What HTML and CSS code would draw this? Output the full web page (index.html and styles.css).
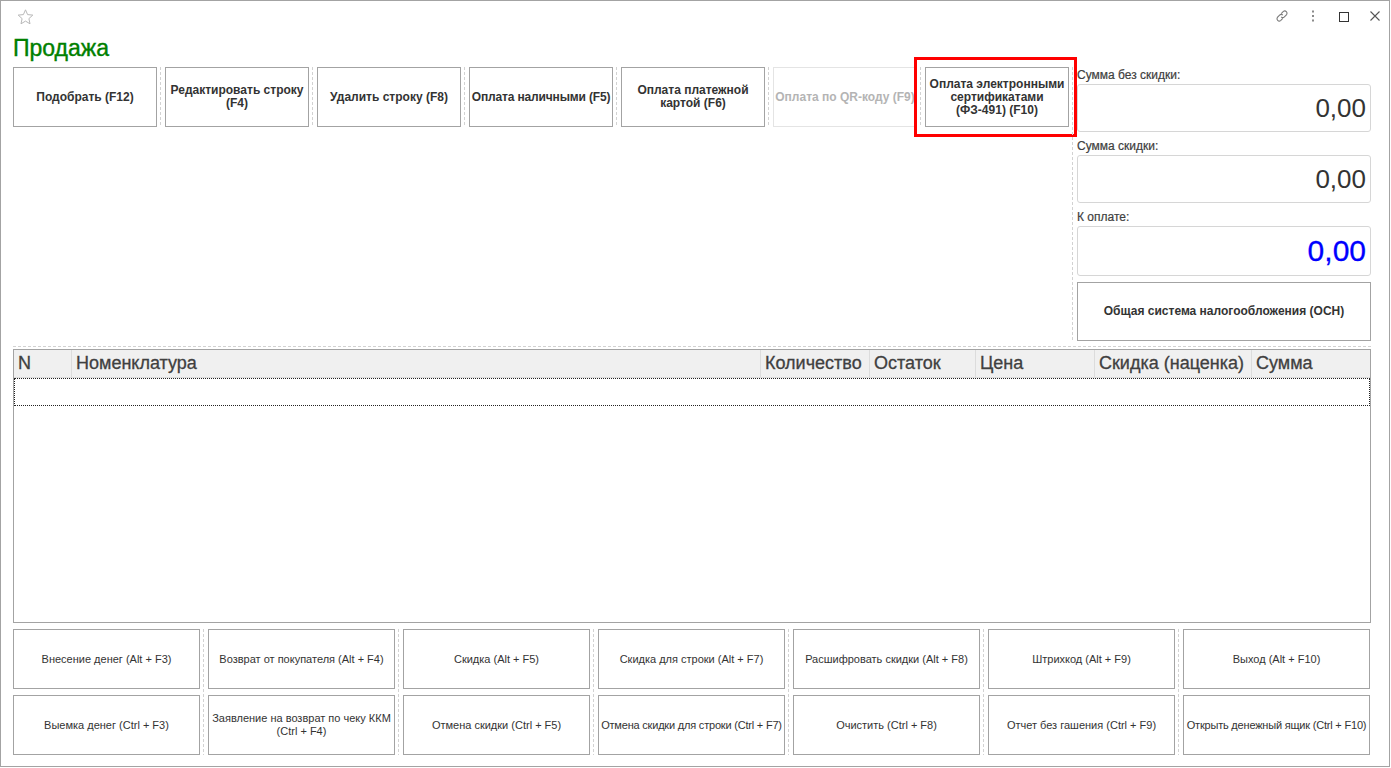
FILE: index.html
```html
<!DOCTYPE html>
<html lang="ru">
<head>
<meta charset="utf-8">
<title>Продажа</title>
<link rel="stylesheet" href="styles.css">
</head>
<body>
<div class="window">
  <div class="titlebar">
    <svg class="star" width="17" height="16" viewBox="0 0 17 16"><polygon points="8.5,0.8 10.6,5.6 15.8,6.1 11.9,9.6 13.0,14.8 8.5,12.1 4.0,14.8 5.1,9.6 1.2,6.1 6.4,5.6" fill="none" stroke="#b8b8b8" stroke-width="1"/></svg>
    <div class="win-actions">
      <svg class="ic" width="14" height="14" viewBox="0 0 14 14"><g fill="none" stroke="#7a7a7a" stroke-width="1.1"><path d="M6.2 4.6 L8.4 2.4 a2.3 2.3 0 0 1 3.2 3.2 L9.4 7.8 a2.3 2.3 0 0 1 -3.2 0"/><path d="M7.8 9.4 L5.6 11.6 a2.3 2.3 0 0 1 -3.2 -3.2 L4.6 6.2 a2.3 2.3 0 0 1 3.2 0"/></g></svg>
      <svg class="ic" width="14" height="14" viewBox="0 0 14 14"><g fill="#8a8a8a"><rect x="6" y="1.5" width="2" height="2"/><rect x="6" y="6" width="2" height="2"/><rect x="6" y="10.5" width="2" height="2"/></g></svg>
      <svg class="ic" width="14" height="14" viewBox="0 0 14 14"><rect x="2.5" y="3.5" width="9" height="9" fill="none" stroke="#333" stroke-width="1"/></svg>
      <svg class="ic" width="14" height="14" viewBox="0 0 14 14"><path d="M2.5 2.5 L11.5 11.5 M11.5 2.5 L2.5 11.5" stroke="#555" stroke-width="1.1" fill="none"/></svg>
    </div>
  </div>

  <div class="content">
    <h1 class="title">Продажа</h1>

    <div class="top">
      <div class="left">
        <div class="btnrow">
          <button class="btn bold">Подобрать (F12)</button>
          <span class="sep"></span>
          <button class="btn bold">Редактировать строку (F4)</button>
          <span class="sep"></span>
          <button class="btn bold">Удалить строку (F8)</button>
          <span class="sep"></span>
          <button class="btn bold nowrap">Оплата наличными (F5)</button>
          <span class="sep"></span>
          <button class="btn bold">Оплата платежной картой (F6)</button>
          <span class="sep"></span>
          <button class="btn bold disabled">Оплата по QR-коду (F9)</button>
          <span class="sep"></span>
          <div class="btn-wrap">
            <button class="btn bold">Оплата электронными сертификатами (ФЗ-491) (F10)</button>
            <span class="highlight"></span>
          </div>
        </div>
      </div>
      <span class="sep vsep"></span>
      <div class="right">
        <div class="label first">Сумма без скидки:</div>
        <div class="field">0,00</div>
        <div class="label">Сумма скидки:</div>
        <div class="field">0,00</div>
        <div class="label">К оплате:</div>
        <div class="field total">0,00</div>
        <button class="btn bold tax">Общая система налогообложения (ОСН)</button>
      </div>
    </div>

    <div class="hsep"></div>

    <div class="table">
      <div class="thead">
        <div class="th">N</div>
        <div class="th">Номенклатура</div>
        <div class="th">Количество</div>
        <div class="th">Остаток</div>
        <div class="th">Цена</div>
        <div class="th">Скидка (наценка)</div>
        <div class="th last">Сумма</div>
      </div>
      <div class="row-focus"></div>
    </div>

    <div class="bottom">
      <div class="col">
        <button class="btn">Внесение денег (Alt + F3)</button>
        <button class="btn">Выемка денег (Ctrl + F3)</button>
      </div>
      <span class="sep"></span>
      <div class="col">
        <button class="btn">Возврат от покупателя (Alt + F4)</button>
        <button class="btn">Заявление на возврат по чеку ККМ (Ctrl + F4)</button>
      </div>
      <span class="sep"></span>
      <div class="col">
        <button class="btn">Скидка (Alt + F5)</button>
        <button class="btn">Отмена скидки (Ctrl + F5)</button>
      </div>
      <span class="sep"></span>
      <div class="col">
        <button class="btn">Скидка для строки (Alt + F7)</button>
        <button class="btn nowrap">Отмена скидки для строки (Ctrl + F7)</button>
      </div>
      <span class="sep"></span>
      <div class="col">
        <button class="btn">Расшифровать скидки (Alt + F8)</button>
        <button class="btn">Очистить (Ctrl + F8)</button>
      </div>
      <span class="sep"></span>
      <div class="col">
        <button class="btn">Штрихкод (Alt + F9)</button>
        <button class="btn">Отчет без гашения (Ctrl + F9)</button>
      </div>
      <span class="sep"></span>
      <div class="col">
        <button class="btn">Выход (Alt + F10)</button>
        <button class="btn nowrap">Открыть денежный ящик (Ctrl + F10)</button>
      </div>
    </div>
  </div>
</div>
</body>
</html>
```

FILE: styles.css
```css
* { box-sizing: border-box; }

html, body {
  margin: 0;
  padding: 0;
  background: #fff;
}

body {
  font-family: "Liberation Sans", Arial, sans-serif;
  color: #333;
}

.window {
  width: 1390px;
  height: 767px;
  border: 1px solid #a3a3a3;
  background: #fff;
  display: flex;
  flex-direction: column;
}

.titlebar {
  height: 34px;
  flex: none;
  display: flex;
  align-items: flex-start;
  justify-content: space-between;
  padding: 8px 7px 0 16px;
}

.star { display: block; }

.win-actions {
  display: flex;
  gap: 17px;
}

.ic { display: block; }

.content {
  padding: 0 18px 0 12px;
  display: flex;
  flex-direction: column;
}

.title {
  margin: 0;
  font-weight: normal;
  font-size: 23px;
  line-height: 26px;
  color: #008000;
  -webkit-text-stroke: 0.4px #008000;
}

.top {
  margin-top: 6px;
  display: flex;
  height: 275px;
}

.left { flex: 1; }

.btnrow {
  display: flex;
  height: 60px;
}

.btn {
  font-family: "Liberation Sans", Arial, sans-serif;
  background: #fff;
  border: 1px solid #a3a3a3;
  border-radius: 0;
  color: #333;
  margin: 0;
  padding: 0 3px;
  text-align: center;
  cursor: default;
}

.bold {
  font-weight: bold;
  font-size: 12px;
  line-height: 13px;
}

.btnrow .btn {
  width: 144px;
  height: 60px;
  flex: none;
  padding: 0 1px;
}

.btnrow .btn.nowrap {
  white-space: nowrap;
  padding: 0;
  letter-spacing: -0.15px;
}

.btn.disabled {
  color: #b4b4b4;
  border-color: #e4e4e4;
  white-space: nowrap;
  padding: 0;
  overflow: hidden;
}

.btn-wrap {
  position: relative;
  width: 144px;
  height: 60px;
  flex: none;
}

.btn-wrap .btn { width: 144px; height: 60px; }

.highlight {
  position: absolute;
  left: -11px;
  top: -10px;
  width: 163px;
  height: 80px;
  border: 3px solid #f00;
  pointer-events: none;
}

.sep {
  width: 8px;
  flex: none;
  display: block;
  position: relative;
}

.sep::before {
  content: "";
  display: block;
  margin-left: 3px;
  width: 1px;
  height: 100%;
  background: repeating-linear-gradient(to bottom, #d2d2d2 0 3px, transparent 3px 5px);
}

.vsep { height: 275px; }

.right {
  width: 294px;
  flex: none;
  display: flex;
  flex-direction: column;
}

.label {
  font-size: 12px;
  line-height: 18px;
  height: 18px;
  margin-top: 5px;
  color: #404040;
  -webkit-text-stroke: 0.2px #404040;
}

.label.first {
  margin-top: -1px;
}

.field {
  height: 48px;
  border: 1px solid #d6d6d6;
  border-radius: 3px;
  font-size: 26px;
  line-height: 46px;
  text-align: right;
  padding-right: 4px;
  color: #333;
}

.field.total {
  height: 50px;
  line-height: 48px;
  font-size: 30px;
  color: #0000ff;
  -webkit-text-stroke: 0.3px #0000ff;
}

.btn.tax {
  margin-top: 6px;
  height: 59px;
  width: 294px;
}

.hsep {
  margin-top: 4px;
  margin-bottom: 2px;
  height: 1px;
  background: repeating-linear-gradient(to right, #d2d2d2 0 3px, transparent 3px 5px);
}

.table {
  height: 274px;
  border: 1px solid #a3a3a3;
  display: flex;
  flex-direction: column;
}

.thead {
  display: grid;
  grid-template-columns: 58px 689px 109px 106px 119px 157px 1fr;
  height: 28px;
  background: #f0f0f0;
  border-bottom: 1px solid #dcdcdc;
}

.th {
  font-size: 18px;
  line-height: 27px;
  padding-left: 4px;
  color: #404040;
  -webkit-text-stroke: 0.3px #404040;
  border-right: 1px solid #dcdcdc;
  white-space: nowrap;
  overflow: hidden;
}

.th.last { border-right: none; }

.row-focus {
  height: 28px;
  border: 1px dotted #222;
}

.bottom {
  margin-top: 6px;
  display: flex;
  height: 126px;
}

.col {
  width: 187px;
  flex: none;
  display: flex;
  flex-direction: column;
  gap: 6px;
}

.col .btn {
  height: 60px;
  font-size: 11px;
  line-height: 13px;
  padding: 0 1px;
}

.col .btn.nowrap {
  white-space: nowrap;
  padding: 0;
  letter-spacing: -0.2px;
}
```
